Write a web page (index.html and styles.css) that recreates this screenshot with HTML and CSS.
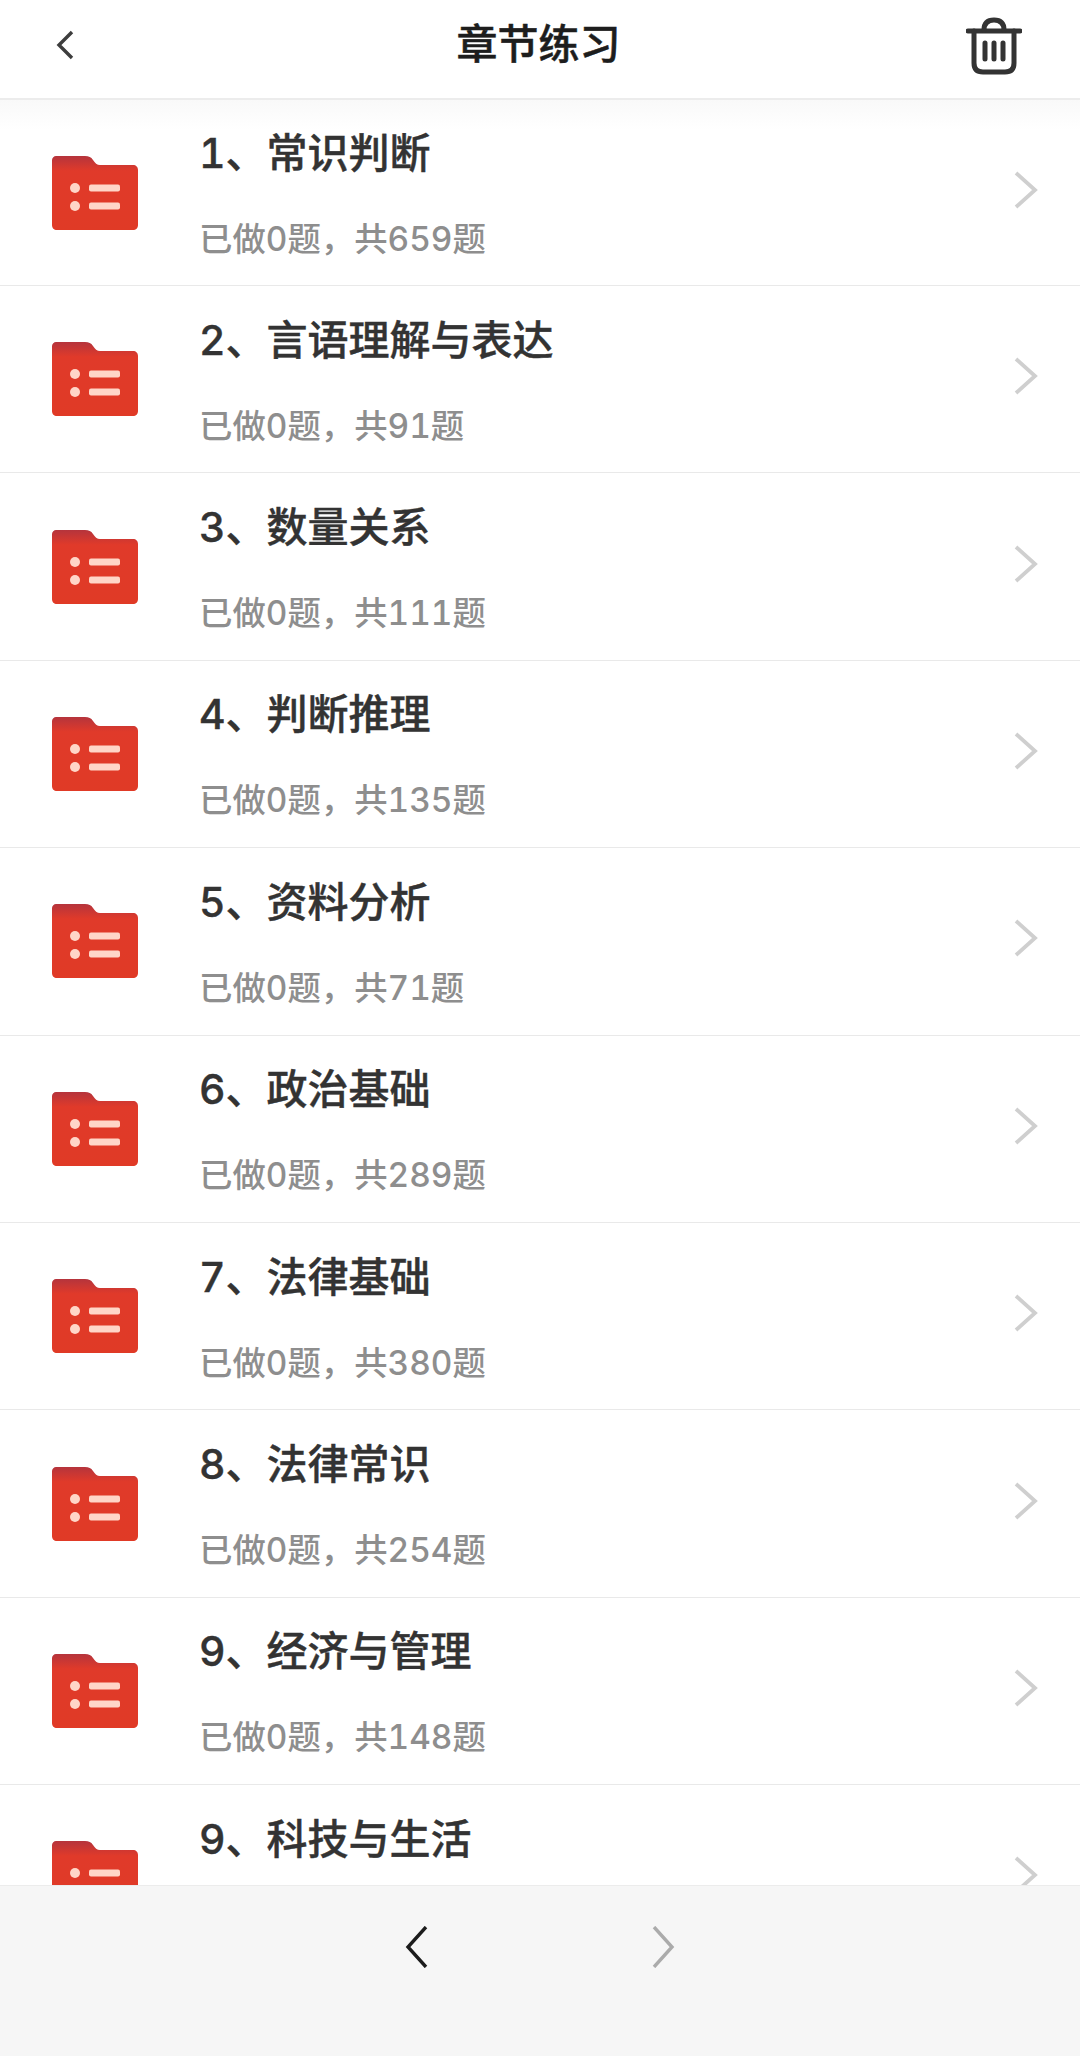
FILE: index.html
```html
<!DOCTYPE html>
<html lang="zh">
<head>
<meta charset="utf-8">
<title>章节练习</title>
<link rel="stylesheet" href="styles.css">
</head>
<body>
<svg class="defs" width="0" height="0" aria-hidden="true">
  <defs>
    <linearGradient id="fg" x1="0" y1="0" x2="0" y2="1">
      <stop offset="0" stop-color="#b5343c"/>
      <stop offset=".2" stop-color="#e03a2a"/>
      <stop offset="1" stop-color="#e03a26"/>
    </linearGradient>
    <symbol id="folder" viewBox="0 0 86 74">
      <path fill="url(#fg)" d="M4 0H33C37 0 39 1 41 4C43 7 45 9 48 9H81C84 9 86 11 86 14V69C86 72 84 74 81 74H5C2 74 0 72 0 69V4C0 2 2 0 4 0Z"/>
      <circle cx="23" cy="32" r="5" fill="#ffd6c8"/>
      <circle cx="23" cy="50" r="5" fill="#ffd6c8"/>
      <rect x="37" y="28.500" width="31" height="7" rx="2" fill="#ffd6c8"/>
      <rect x="37" y="46.500" width="31" height="7" rx="2" fill="#ffd6c8"/>
    </symbol>
    <symbol id="chev" viewBox="0 0 24 38">
      <path d="M2 2L21 19L2 36" fill="none" stroke="#cfcfcf" stroke-width="3.800"/>
    </symbol>
  </defs>
</svg>
<div class="page">
  <header class="topbar">
    <svg class="back" viewBox="0 0 20 30"><path d="M17 2L4 15L17 28" fill="none" stroke="#3d3d3d" stroke-width="3.400"/></svg>
    <h1 class="title">章节练习</h1>
    <svg class="trash" viewBox="0 0 56 58" fill="none" stroke="#333" stroke-width="5" stroke-linecap="round">
      <path d="M2 14H54"/>
      <path d="M18 13C18 6 22 3 28 3C34 3 38 6 38 13"/>
      <path d="M8 14V46C8 52 11 55 17 55H39C45 55 48 52 48 46V14"/>
      <path d="M19 26V42M28 26V42M37 26V42"/>
    </svg>
  </header>
  <main class="list">
    <div class="row"><svg class="folder"><use href="#folder"/></svg><div class="text"><div class="name">1、常识判断</div><div class="count">已做0题，共659题</div></div><svg class="chevron"><use href="#chev"/></svg></div>
    <div class="row"><svg class="folder"><use href="#folder"/></svg><div class="text"><div class="name">2、言语理解与表达</div><div class="count">已做0题，共91题</div></div><svg class="chevron"><use href="#chev"/></svg></div>
    <div class="row"><svg class="folder"><use href="#folder"/></svg><div class="text"><div class="name">3、数量关系</div><div class="count">已做0题，共111题</div></div><svg class="chevron"><use href="#chev"/></svg></div>
    <div class="row"><svg class="folder"><use href="#folder"/></svg><div class="text"><div class="name">4、判断推理</div><div class="count">已做0题，共135题</div></div><svg class="chevron"><use href="#chev"/></svg></div>
    <div class="row"><svg class="folder"><use href="#folder"/></svg><div class="text"><div class="name">5、资料分析</div><div class="count">已做0题，共71题</div></div><svg class="chevron"><use href="#chev"/></svg></div>
    <div class="row"><svg class="folder"><use href="#folder"/></svg><div class="text"><div class="name">6、政治基础</div><div class="count">已做0题，共289题</div></div><svg class="chevron"><use href="#chev"/></svg></div>
    <div class="row"><svg class="folder"><use href="#folder"/></svg><div class="text"><div class="name">7、法律基础</div><div class="count">已做0题，共380题</div></div><svg class="chevron"><use href="#chev"/></svg></div>
    <div class="row"><svg class="folder"><use href="#folder"/></svg><div class="text"><div class="name">8、法律常识</div><div class="count">已做0题，共254题</div></div><svg class="chevron"><use href="#chev"/></svg></div>
    <div class="row"><svg class="folder"><use href="#folder"/></svg><div class="text"><div class="name">9、经济与管理</div><div class="count">已做0题，共148题</div></div><svg class="chevron"><use href="#chev"/></svg></div>
    <div class="row"><svg class="folder"><use href="#folder"/></svg><div class="text"><div class="name">9、科技与生活</div><div class="count"></div></div><svg class="chevron"><use href="#chev"/></svg></div>
  </main>
  <footer class="pager">
    <svg class="pg" viewBox="0 0 24 42"><path d="M21 1L3 21L21 41" fill="none" stroke="#1c1c1c" stroke-width="3.400"/></svg>
    <svg class="pg" viewBox="0 0 24 42"><path d="M3 1L21 21L3 41" fill="none" stroke="#ababab" stroke-width="3.400"/></svg>
  </footer>
</div>
</body>
</html>
```
FILE: styles.css
```css
* { box-sizing: border-box; }
html, body { margin: 0; padding: 0; }
body {
  background: #fff;
  font-family: Inter, "Noto Sans CJK SC", sans-serif;
  font-feature-settings: "tnum";
}
.defs { position: absolute; }
.page {
  width: 1080px;
  height: 2056px;
  display: flex;
  flex-direction: column;
  overflow: hidden;
}
.topbar {
  flex: none;
  height: 100px;
  display: grid;
  grid-template-columns: 1fr auto 1fr;
  align-items: center;
  padding: 2px 58px 8px 55px;
  border-bottom: 2px solid #ececec;
}
.back { width: 20px; height: 30px; margin-bottom: 2px; }
.trash { width: 56px; height: 58px; justify-self: end; }
.title {
  margin: 0 0 5px;
  font-size: 41px;
  line-height: 56px;
  font-weight: 500;
  color: #1d1d1d;
  -webkit-text-stroke: 0.5px #1d1d1d;
}
.list {
  flex: 1;
  min-height: 0;
  overflow: hidden;
}
.row {
  height: 187.4px;
  display: flex;
  align-items: center;
  border-bottom: 1px solid #e9e9e9;
  padding: 0 42px 0 52px;
}
.row:first-child { height: 186px; background: linear-gradient(#f9f9f9, #fff 30px); }
.folder { width: 86px; height: 74px; flex: none; }
.text { flex: 1; margin-left: 61px; margin-top: 0; }
.name {
  font-size: 41px;
  line-height: 56px;
  font-weight: 500;
  color: #333;
  -webkit-text-stroke: 0.4px #333;
}
.count {
  font-size: 33.4px;
  line-height: 42px;
  min-height: 42px;
  margin-top: 37px;
  font-weight: 500;
  color: #8e8e8e;
}
.chevron { width: 24px; height: 38px; flex: none; margin-top: -6px; }
.pager {
  flex: none;
  height: 171px;
  background: #f6f6f6;
  border-top: 1px solid #ececec;
  display: flex;
  justify-content: center;
  gap: 222px;
  padding-top: 40px;
}
.pg { width: 24px; height: 42px; }
```
